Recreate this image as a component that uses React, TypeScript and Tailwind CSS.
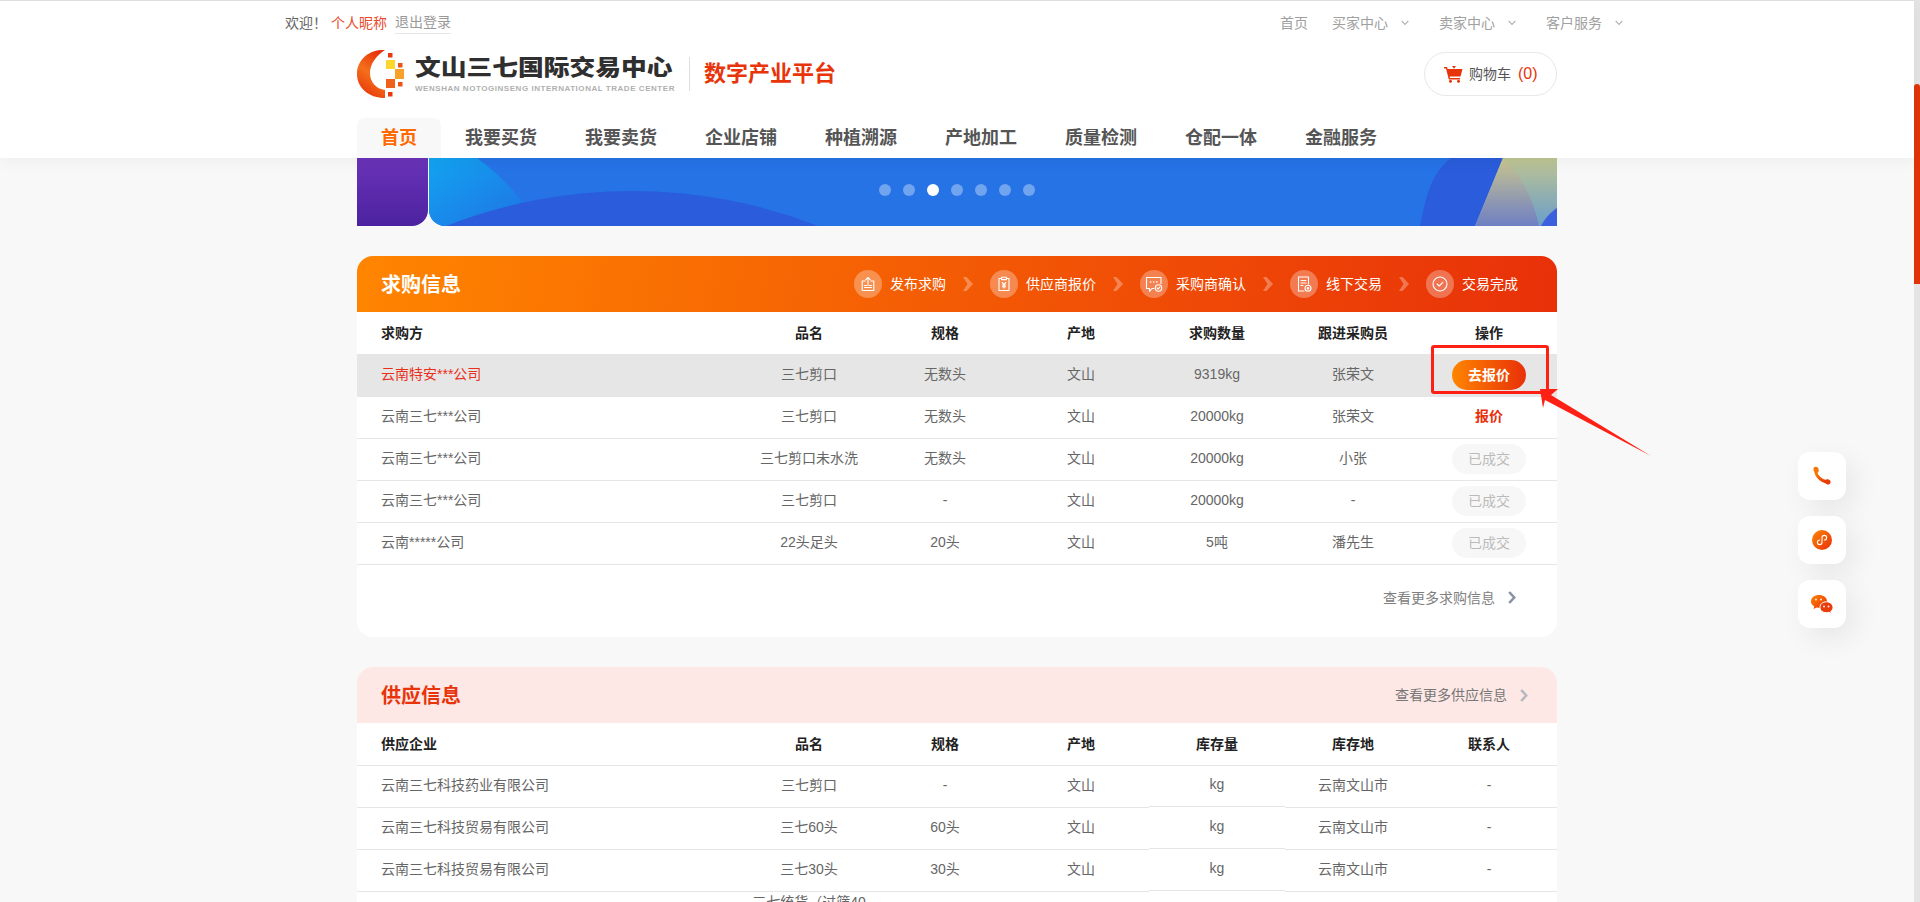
import React from "react";

const topRight = ["买家中心", "卖家中心", "客户服务"];
const navItems = ["我要买货", "我要卖货", "企业店铺", "种植溯源", "产地加工", "质量检测", "仓配一体", "金融服务"];
const gridCols = "grid grid-cols-[384px_repeat(6,136px)]";

function Logo() {
  return (
    <svg width="48" height="48" viewBox="0 0 48 48" className="shrink-0">
      <defs>
        <linearGradient id="logoRing" x1="0.7" y1="0" x2="0.3" y2="1">
          <stop offset="0" stopColor="#e8300a" />
          <stop offset="0.5" stopColor="#f4701a" />
          <stop offset="1" stopColor="#e8340a" />
        </linearGradient>
      </defs>
      <path d="M28 0C12-1 0 10 0 24c0 14 12 24 28 24v-8c-9-1-15-8-15-17 0-9 6-17 15-23Z" fill="url(#logoRing)" />
      <rect x="31" y="3" width="4.5" height="4.5" fill="#e8380f" />
      <rect x="29" y="10" width="9" height="9" fill="#ffd62e" />
      <rect x="41" y="13" width="4.5" height="4.5" fill="#ee5215" />
      <rect x="38" y="19" width="9" height="10" fill="#f7a12a" />
      <rect x="29" y="29" width="9" height="9" fill="#f0601a" />
      <rect x="41" y="32" width="4.5" height="4.5" fill="#ee5215" />
      <rect x="31" y="42" width="4.5" height="4.5" fill="#e8380f" />
    </svg>
  );
}

function Chev({ className }: { className: string }) {
  return (
    <svg width="8" height="13" viewBox="0 0 8 13" className={className} fill="none" stroke="currentColor" strokeWidth="2.6">
      <path d="M1.2 1l5 5.5-5 5.5" />
    </svg>
  );
}

function SmallDown() {
  return (
    <svg width="8" height="6" viewBox="0 0 8 6" fill="none" stroke="#b5b5b5" strokeWidth="1.2" className="ml-[13px]">
      <path d="M.7 1l3.3 3.4L7.3 1" />
    </svg>
  );
}

function StepIcon({ kind }: { kind: number }) {
  const c = { fill: "none", stroke: "#fff", strokeWidth: 1.1, strokeLinecap: "round" as const, strokeLinejoin: "round" as const };
  return (
    <span className="flex h-[28px] w-[28px] shrink-0 items-center justify-center rounded-full bg-white/30">
      <svg width="18" height="18" viewBox="0 0 18 18" {...c}>
        {kind === 0 && (
          <>
            <path d="M6 6H3.2v9.5h11.6V6H12" />
            <path d="M9 10.5V2.5M6.6 4.8 9 2.5l2.4 2.3" />
            <path d="M5.5 12.5h7M5.5 10.5h2M10.5 10.5h2" />
          </>
        )}
        {kind === 1 && (
          <>
            <path d="M6 3.5H4v12h10v-12h-2" />
            <rect x="6.5" y="2.2" width="5" height="2.4" />
            <path d="M7.2 7.5 9 9.4l1.8-1.9M7.3 10h3.4M7.3 11.7h3.4M9 9.4v3.6" />
          </>
        )}
        {kind === 2 && (
          <>
            <path d="M9 13.5H7l-2.5 2.8v-2.8H1.5V2.5h14.5v6" />
            <path d="M5.5 7h.2M8.6 7h.2M11.7 7h.2" strokeWidth="1.6" />
            <circle cx="13.5" cy="13" r="3.2" />
            <path d="m12.1 13 1 1 1.8-1.8" />
          </>
        )}
        {kind === 3 && (
          <>
            <path d="M9 16H3.5V2h10v7" />
            <path d="M6 5.5h5M6 8h5M6 10.5h2" />
            <circle cx="13" cy="13.3" r="3" />
            <circle cx="13" cy="13.3" r=".8" fill="#fff" />
          </>
        )}
        {kind === 4 && (
          <>
            <circle cx="9" cy="9" r="7" />
            <path d="m6.2 9 2 2 3.6-3.6" />
          </>
        )}
      </svg>
    </span>
  );
}

function Step({ kind, label, last }: { kind: number; label: string; last?: boolean }) {
  return (
    <div className="flex items-center">
      <StepIcon kind={kind} />
      <span className="ml-[8px] text-sm text-white">{label}</span>
      {!last && (
        <svg width="10" height="14" viewBox="0 0 10 14" className="mx-[17px]">
          <path d="M0 0h3.500l6.500 7-6.500 7H0l4.500-7Z" fill="#fff" fillOpacity="0.3" />
        </svg>
      )}
    </div>
  );
}

function Cell({ children, first, short, cls }: { children: React.ReactNode; first?: boolean; short?: boolean; cls?: string }) {
  return (
    <div
      className={`flex items-center border-b border-[#e6e6e6] pb-[4px] ${short ? "h-[41px]" : "h-[42px]"} ${
        first ? "pl-[24px]" : "justify-center text-center"
      } ${cls ?? ""}`}
    >
      {children}
    </div>
  );
}

function HeadRow({ labels }: { labels: string[] }) {
  return (
    <div className={`${gridCols} h-[43px] items-center border-b border-[#e6e6e6] pb-[1px] text-sm font-bold text-[#222]`}>
      {labels.map((l, i) => (
        <div key={l} className={i === 0 ? "pl-[24px]" : "text-center"}>
          {l}
        </div>
      ))}
    </div>
  );
}

type Buy = [string, string, string, string, string, string, string];

const buys: Buy[] = [
  ["云南特安***公司", "三七剪口", "无数头", "文山", "9319kg", "张荣文", "go"],
  ["云南三七***公司", "三七剪口", "无数头", "文山", "20000kg", "张荣文", "quote"],
  ["云南三七***公司", "三七剪口未水洗", "无数头", "文山", "20000kg", "小张", "done"],
  ["云南三七***公司", "三七剪口", "-", "文山", "20000kg", "-", "done"],
  ["云南*****公司", "22头足头", "20头", "文山", "5吨", "潘先生", "done"],
];

const supplies = [
  ["云南三七科技药业有限公司", "三七剪口", "-"],
  ["云南三七科技贸易有限公司", "三七60头", "60头"],
  ["云南三七科技贸易有限公司", "三七30头", "30头"],
];

function Action({ kind }: { kind: string }) {
  if (kind === "go")
    return (
      <span className="mt-[2px] flex h-[30px] w-[74px] items-center justify-center rounded-full bg-[linear-gradient(90deg,#ff8500,#e83009)] font-bold text-white">
        去报价
      </span>
    );
  if (kind === "quote") return <span className="font-bold text-[#e8300a]">报价</span>;
  return <span className="mt-[2px] flex h-[30px] w-[74px] items-center justify-center rounded-full bg-[#f7f7f7] text-[#bbb]">已成交</span>;
}

function Banner() {
  return (
    <div className="relative flex h-[68px] w-[1200px] gap-px">
      <div className="h-full w-[71px] rounded-br-[16px] bg-[linear-gradient(180deg,#6a33b8,#4c22a0)]" />
      <div className="h-full flex-1 overflow-hidden rounded-bl-[16px] bg-[#2673e6]">
        <svg width="1128" height="68" viewBox="0 0 1128 68" className="block">
          <defs>
            <linearGradient id="bnL" x1="0" y1="0" x2="1" y2="1">
              <stop offset="0" stopColor="#12a4f0" />
              <stop offset="1" stopColor="#2070e4" />
            </linearGradient>
            <linearGradient id="bnA" x1="0" y1="0" x2="0" y2="1">
              <stop offset="0" stopColor="#bfc491" />
              <stop offset="1" stopColor="#6a9ecb" />
            </linearGradient>
            <linearGradient id="bnB" x1="0" y1="0" x2="0" y2="1">
              <stop offset="0" stopColor="#c9c58f" />
              <stop offset="1" stopColor="#6e7fc4" />
            </linearGradient>
          </defs>
          <path d="M0 0h48c30 22 50 46 57 68H0Z" fill="url(#bnL)" />
          <path d="M17 68A512 512 0 0 1 389 68Z" fill="#2a5cdb" />
          <path d="M1022 0h53l-29 68h-55c6-28 10-52 31-68Z" fill="#2a5cdb" />
          <path d="M1074 0h54v68h-82Z" fill="url(#bnA)" />
          <path d="M1074 0c21 20 31 45 36 68h-64Z" fill="url(#bnB)" />
          <path d="M1128 50v18h-16c4-8 10-14 16-18Z" fill="#3b5fdd" />
        </svg>
      </div>
      <div className="absolute bottom-[30px] left-0 flex w-full justify-center gap-[12px]">
        {[0, 1, 2, 3, 4, 5, 6].map((i) => (
          <span key={i} className={`h-[12px] w-[12px] rounded-full ${i === 2 ? "bg-white" : "bg-white/35"}`} />
        ))}
      </div>
    </div>
  );
}

function FloatBtn({ children }: { children: React.ReactNode }) {
  return (
    <div className="flex h-[48px] w-[48px] items-center justify-center rounded-[12px] bg-white shadow-[8px_10px_28px_rgba(0,0,0,0.07)]">
      {children}
    </div>
  );
}

function Floats() {
  return (
    <div className="absolute left-[1798px] top-[452px] flex flex-col gap-[16px]">
      <FloatBtn>
        <svg width="20" height="20" viewBox="0 0 20 20">
          <defs>
            <linearGradient id="fg1" x1="0" y1="0" x2="1" y2="1">
              <stop offset="0" stopColor="#ff8500" />
              <stop offset="1" stopColor="#e83009" />
            </linearGradient>
          </defs>
          <path d="M3.400 4C3.800 9.500 8.500 15 15.500 16" fill="none" stroke="url(#fg1)" strokeWidth="3" strokeLinecap="round" />
          <path d="M1.500 3.800C1.100 2 2.300.8 3.800.8c1.600 0 2.500 1.200 2.900 3 .3 1.700-.2 2.800-1.700 3.200C3.300 7.400 2 5.600 1.500 3.800Z" fill="#f97506" />
          <path d="M12.800 14.800c1-1.400 2.300-1.900 3.800-1.200 1.500.7 2.300 1.600 1.900 3.100-.4 1.300-1.800 2.200-3.300 1.700-1.500-.5-3-2-2.400-3.600Z" fill="#ea3c09" />
        </svg>
      </FloatBtn>
      <FloatBtn>
        <svg width="20" height="20" viewBox="0 0 20 20">
          <defs>
            <linearGradient id="fg2" x1="0" y1="0" x2="1" y2="1">
              <stop offset="0" stopColor="#ff8500" />
              <stop offset="1" stopColor="#e83009" />
            </linearGradient>
          </defs>
          <circle cx="10" cy="10" r="10" fill="url(#fg2)" />
          <path
            d="M7.700 10a2.300 2.300 0 1 0 2.300 2.300V7.700a2.300 2.300 0 1 1 2.300 2.300"
            fill="none"
            stroke="#fff"
            strokeWidth="1.100"
            strokeLinecap="round"
          />
        </svg>
      </FloatBtn>
      <FloatBtn>
        <svg width="24" height="20" viewBox="0 0 24 20">
          <defs>
            <linearGradient id="fg3" x1="0" y1="0" x2="1" y2="1">
              <stop offset="0" stopColor="#ff8500" />
              <stop offset="1" stopColor="#e83009" />
            </linearGradient>
          </defs>
          <path d="M9 1c4.600 0 8 2.700 8 6.400 0 3.600-3.400 6.400-8 6.400-.8 0-1.600-.1-2.300-.3L3.600 15l.6-2.800C2 11 1 9.300 1 7.400 1 3.700 4.400 1 9 1Z" fill="url(#fg3)" />
          <path d="M16.300 7.800c3.500 0 6.700 2.300 6.700 5.500 0 1.700-.8 3-2.200 4l.5 2.200-2.400-1.200c-.8.200-1.700.4-2.600.4-3.500 0-6.300-2.200-6.300-5.400s2.800-5.500 6.300-5.500Z" fill="#e83c0a" stroke="#fff" strokeWidth="1" />
          <circle cx="6" cy="5.500" r="1" fill="#fff" fillOpacity="0.85" />
          <circle cx="11" cy="5.500" r="1" fill="#fff" fillOpacity="0.85" />
          <circle cx="14" cy="12.500" r="1" fill="#fff" fillOpacity="0.9" />
          <circle cx="18.500" cy="12.500" r="1" fill="#fff" fillOpacity="0.9" />
        </svg>
      </FloatBtn>
    </div>
  );
}

export default function App() {
  return (
    <div className="relative flex h-[902px] w-full overflow-hidden bg-[#f8f8f8] font-['Liberation_Sans','Noto_Sans_CJK_SC',sans-serif] text-sm text-[#666]">
      <div className="w-[1914px] shrink-0">
        <header className="relative z-10 h-[158px] border-t border-[#dedede] bg-white shadow-[0_2px_16px_rgba(0,0,0,0.05)]">
          <div className="mx-auto flex h-[43px] w-[1344px] items-center justify-between">
            <div className="flex items-center">
              <span className="w-[46px] text-[#666]">欢迎！</span>
              <span className="text-[#ea4a2a]">个人昵称</span>
              <span className="ml-[8px] border-b border-[#e6e6e6] pb-[1px] text-[#999]">退出登录</span>
            </div>
            <div className="flex items-center text-[#a0a0a0]">
              <span className="mr-[24px]">首页</span>
              {topRight.map((t, i) => (
                <div key={t} className={`flex items-center ${i < 2 ? "mr-[30px]" : "mr-[6px]"}`}>
                  <span>{t}</span>
                  <SmallDown />
                </div>
              ))}
            </div>
          </div>
          <div className="mx-auto w-[1200px]">
            <div className="flex h-[60px] items-center justify-between">
              <div className="flex items-center">
                <Logo />
                <div className="ml-[10px] flex w-[258px] flex-col">
                  <span className="origin-left scale-x-[1.17] whitespace-nowrap text-[22px] leading-[26px] font-black text-[#2f2f2f]">
                    文山三七国际交易中心
                  </span>
                  <span className="mt-[3px] whitespace-nowrap text-[8px] leading-[10px] font-bold tracking-[0.54px] text-[#b0b0b0]">
                    WENSHAN NOTOGINSENG INTERNATIONAL TRADE CENTER
                  </span>
                </div>
                <span className="ml-[16px] h-[34px] w-px bg-[#dedede]" />
                <span className="ml-[14px] text-[22px] font-bold text-[#e8340a]">数字产业平台</span>
              </div>
              <div className="flex h-[44px] w-[133px] items-center rounded-full border border-[#e8e8e8] pl-[19px]">
                <svg width="19" height="17" viewBox="0 0 19 17" fill="#e8340a">
                  <path d="M0 1h3l.6 2H18.500l-2 7.500H5.600l.4 1.500H16v1.500H4.800L2 2.500H0Z" />
                  <path d="M8 0h4l-2 2.800Z" />
                  <circle cx="6.500" cy="15.300" r="1.500" />
                  <circle cx="14.500" cy="15.300" r="1.500" />
                </svg>
                <span className="ml-[6px] pb-[1px] text-[#555]">购物车</span>
                <span className="ml-[7px] text-base text-[#e8340a]">(0)</span>
              </div>
            </div>
            <nav className="mt-[14px] flex h-[40px] items-center text-lg font-bold text-[#555]">
              <span className="flex h-full items-center rounded-t-lg bg-[#f8f8f8] px-[24px] text-[#ff6a00]">首页</span>
              {navItems.map((n) => (
                <span key={n} className="flex h-full items-center px-[24px]">
                  {n}
                </span>
              ))}
            </nav>
          </div>
        </header>

        <main className="mx-auto w-[1200px]">
          <Banner />

          <section className="mt-[30px] rounded-[16px] bg-white">
            <div className="flex h-[56px] items-center justify-between rounded-t-[16px] bg-[linear-gradient(100deg,#ff8500,#e83009)] pr-[39px] pl-[24px]">
              <h2 className="pt-[2px] text-xl font-bold text-white">求购信息</h2>
              <div className="flex items-center">
                <Step kind={0} label="发布求购" />
                <Step kind={1} label="供应商报价" />
                <Step kind={2} label="采购商确认" />
                <Step kind={3} label="线下交易" />
                <Step kind={4} label="交易完成" last />
              </div>
            </div>
            <HeadRow labels={["求购方", "品名", "规格", "产地", "求购数量", "跟进采购员", "操作"]} />
            {buys.map((r, i) => (
              <div key={i} className={`${gridCols} ${i === 0 ? "bg-[#e6e6e6]" : ""}`}>
                {r.map((v, j) => (
                  <Cell key={j} first={j === 0} cls={i === 0 && j === 0 ? "text-[#e8301a]" : ""}>
                    {j === 6 ? <Action kind={v} /> : v}
                  </Cell>
                ))}
              </div>
            ))}
            <div className="flex h-[72px] items-center justify-end pr-[41px] pb-[7px] text-[#808080]">
              <span>查看更多求购信息</span>
              <Chev className="ml-[13px] text-[#8a93a5]" />
            </div>
          </section>

          <section className="mt-[30px] rounded-[16px] bg-white">
            <div className="flex h-[56px] items-center justify-between rounded-t-[16px] bg-[#fde8e5] pr-[29px] pl-[24px]">
              <h2 className="pt-[2px] text-xl font-bold text-[#e8340a]">供应信息</h2>
              <div className="flex items-center text-[#777]">
                <span>查看更多供应信息</span>
                <Chev className="ml-[13px] text-[#b5b9c0]" />
              </div>
            </div>
            <HeadRow labels={["供应企业", "品名", "规格", "产地", "库存量", "库存地", "联系人"]} />
            {supplies.map((r, i) => (
              <div key={i} className={`${gridCols} items-start`}>
                <Cell first>{r[0]}</Cell>
                <Cell>{r[1]}</Cell>
                <Cell>{r[2]}</Cell>
                <Cell>文山</Cell>
                <Cell short>kg</Cell>
                <Cell>云南文山市</Cell>
                <Cell>-</Cell>
              </div>
            ))}
            <div className={`${gridCols} h-[62px] items-center`}>
              <div className="pl-[24px]">云南三七科技贸易有限公司</div>
              <div className="self-start text-center leading-5">
                三七统货（过筛40
                <br />
                -60头）
              </div>
              <div className="text-center">-</div>
              <div className="text-center">文山</div>
              <div className="text-center">kg</div>
              <div className="text-center">云南文山市</div>
              <div className="text-center">-</div>
            </div>
          </section>
        </main>
      </div>

      <div className="w-[6px] shrink-0 bg-[#e4e4e4]">
        <div className="mt-[84px] h-[200px] w-full rounded-t-[3px] bg-[#e03408]" />
      </div>

      <Floats />

      <div className="pointer-events-none absolute left-[1431px] top-[345px] h-[49px] w-[118px] rounded-[3px] border-[3px] border-[#ff2015]" />
      <svg width="125" height="80" viewBox="0 0 125 80" className="pointer-events-none absolute left-[1535px] top-[385px]">
        <path d="M5 4h18l-7 6 100 61-106-56-2 8Z" fill="#ff2015" />
      </svg>
    </div>
  );
}
